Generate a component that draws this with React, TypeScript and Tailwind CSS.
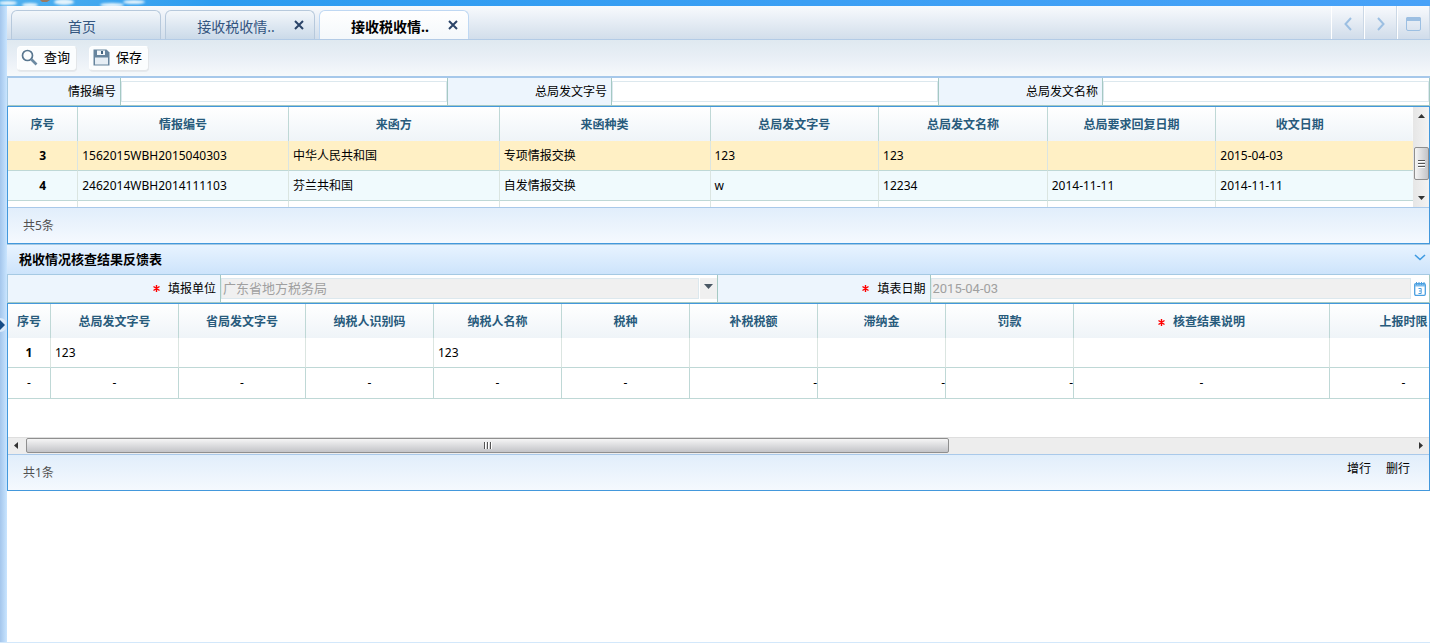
import type { ReactNode } from "react";

const tabs = [
  { id: 1, title: "首页", active: false, closable: false },
  { id: 2, title: "接收税收情..", active: false, closable: true },
  { id: 3, title: "接收税收情..", active: true, closable: true },
];

const letterColumns = [
  { title: "序号", width: "w-[5%]" },
  { title: "情报编号", width: "w-[15%]" },
  { title: "来函方", width: "w-[15%]" },
  { title: "来函种类", width: "w-[15%]" },
  { title: "总局发文字号", width: "w-[12%]" },
  { title: "总局发文名称", width: "w-[12%]" },
  { title: "总局要求回复日期", width: "w-[12%]" },
  { title: "收文日期", width: "w-[14%]" },
];

const letters = [
  { bg: "bg-[#fff0c5]", cells: ["3", "1562015WBH2015040303", "中华人民共和国", "专项情报交换", "123", "123", "", "2015-04-03"] },
  { bg: "bg-[#f0fafd]", cells: ["4", "2462014WBH2014111103", "芬兰共和国", "自发情报交换", "w", "12234", "2014-11-11", "2014-11-11"] },
  { bg: "bg-white", cells: ["", "", "", "", "", "", "", ""] },
];

const resultColumns = [
  { title: "序号", width: "w-[43px]", value: "1", total: "text-center" },
  { title: "总局发文字号", width: "w-[128px]", value: "123", total: "text-center" },
  { title: "省局发文字号", width: "w-[127px]", value: "", total: "text-center" },
  { title: "纳税人识别码", width: "w-[128px]", value: "", total: "text-center" },
  { title: "纳税人名称", width: "w-[128px]", value: "123", total: "text-center" },
  { title: "税种", width: "w-[128px]", value: "", total: "text-center" },
  { title: "补税税额", width: "w-[128px]", value: "", total: "text-right" },
  { title: "滞纳金", width: "w-[128px]", value: "", total: "text-right" },
  { title: "罚款", width: "w-[128px]", value: "", total: "text-right" },
  { title: "核查结果说明", width: "w-[256px]", value: "", total: "text-center", required: true },
  { title: "上报时限", width: "w-[148px]", value: "", total: "text-center" },
];

function Star() {
  return (
    <svg width="7" height="7" viewBox="0 0 7 7" className="inline-block shrink-0" aria-hidden="true">
      <path d="M3.5 0v7M0.5 1.5l6 4M6.5 1.5l-6 4" stroke="#f00" strokeWidth="1.4" />
    </svg>
  );
}

function CloseIcon() {
  return (
    <svg width="10" height="10" viewBox="0 0 10 10" aria-hidden="true">
      <path d="M1 1l8 8M9 1l-8 8" stroke="#2b4468" strokeWidth="2" />
    </svg>
  );
}

function NavButton({ label, children }: { label: string; children: ReactNode }) {
  return (
    <button
      type="button"
      aria-label={label}
      className="flex h-full w-[33px] items-center justify-center border-l border-l-white border-r border-r-[#cbd8e6] bg-linear-to-b from-[#f8fafd] to-[#d0dcea] pt-[2px] text-[#9cbfe2]"
    >
      {children}
    </button>
  );
}

function ToolButton({ children }: { children: ReactNode }) {
  return (
    <button
      type="button"
      className="flex h-[25px] items-center gap-[6px] rounded-sm border border-[#e3e6e9] border-t-white border-l-white bg-[#fbfdfe] pr-[6px] pb-px pl-[3px] text-[13px] shadow-2xs"
    >
      {children}
    </button>
  );
}

function Field({ id, label, width }: { id: string; label: string; width: string }) {
  return (
    <>
      <label
        htmlFor={id}
        className={`flex h-[27px] shrink-0 items-center justify-end border-r border-[#a5c9c3] bg-[#edf5fd] pr-1 ${width}`}
      >
        {label}
      </label>
      <div className="flex min-w-0 flex-1 items-center border-r border-[#a5c9c3] bg-white">
        <input id={id} type="text" className="h-[21px] w-full border border-[#dce8ee] bg-white px-1 outline-none" />
      </div>
    </>
  );
}

export default function App() {
  return (
    <div className="flex min-h-screen flex-col overflow-hidden border-b border-[#d3e8fb] bg-white font-['Noto_Sans','Noto_Sans_CJK_SC',sans-serif] text-xs text-black">
      {/* Banner edge */}
      <div className="h-[6px] overflow-hidden bg-linear-to-r from-[#4fb0ee] via-[#2c9cf0] via-15% to-[#48a2f8]">
        <svg width="180" height="6" viewBox="0 0 180 6" aria-hidden="true">
          <defs>
            <filter id="cloud">
              <feGaussianBlur stdDeviation="1.2" />
            </filter>
          </defs>
          <g fill="#e3f3fc" filter="url(#cloud)">
            <ellipse cx="8" cy="3" rx="9" ry="2" />
            <ellipse cx="30" cy="5" rx="8" ry="2" />
            <ellipse cx="64" cy="2" rx="10" ry="3" />
            <ellipse cx="112" cy="5" rx="12" ry="2" />
            <ellipse cx="134" cy="2" rx="11" ry="2" />
          </g>
          <path d="M40 0h10l-3 2h-5z" fill="#9b7b62" />
        </svg>
      </div>

      <div className="flex flex-1">
        {/* Splitter */}
        <div className="flex w-[7px] shrink-0 bg-linear-to-r from-[#a4c6ec] to-[#c9e5ff]">
          <button type="button" aria-label="展开" className="mt-[312px] h-[14px] w-[6px]">
            <svg width="6" height="14" viewBox="0 0 6 14" aria-hidden="true">
              <path d="M0 0a7 7 0 0 1 0 14z" fill="#dbeafa" />
              <path d="M0 2l5 5-5 5z" fill="#174c86" />
            </svg>
          </button>
        </div>

        <main className="min-w-0 flex-1">
          {/* Tabs */}
          <div className="flex h-[34px] items-end border-b border-[#b3cbe6] bg-linear-to-b from-[#f8fafd] to-[#d2deeb] pl-1">
            <div role="tablist" className="flex flex-1 gap-1">
              {tabs.map((tab) => (
                <div
                  key={tab.id}
                  className={`flex h-[29px] w-[150px] items-center rounded-t-md border border-b-0 pt-[3px] pl-5 ${
                    tab.active
                      ? "-mb-px border-[#bfd8f3] bg-linear-to-b from-white to-[#f4f8fb]"
                      : "border-[#b7c9dc] bg-linear-to-b from-[#f3f7fb] to-[#cbdae9]"
                  }`}
                >
                  <button
                    type="button"
                    role="tab"
                    aria-selected={tab.active}
                    className={`flex-1 text-center text-sm ${tab.active ? "font-bold text-black" : "text-[#33557f]"}`}
                  >
                    {tab.title}
                  </button>
                  <span className="flex w-7 pb-1 pl-2">
                    {tab.closable && (
                      <button type="button" aria-label="关闭">
                        <CloseIcon />
                      </button>
                    )}
                  </span>
                </div>
              ))}
            </div>
            <div className="flex h-full">
              <NavButton label="向左">
                <svg width="8" height="14" viewBox="0 0 8 14" fill="none" stroke="currentColor" strokeWidth="2">
                  <path d="M7 1L1.500 7 7 13" />
                </svg>
              </NavButton>
              <NavButton label="向右">
                <svg width="8" height="14" viewBox="0 0 8 14" fill="none" stroke="currentColor" strokeWidth="2">
                  <path d="M1 1l5.500 6L1 13" />
                </svg>
              </NavButton>
              <NavButton label="最大化">
                <svg width="15" height="14" viewBox="0 0 15 14">
                  <rect x=".5" y=".5" width="14" height="13" rx="1.500" fill="none" stroke="currentColor" />
                  <path d="M0 1.500A1.500 1.500 0 0 1 1.500 0h12A1.500 1.500 0 0 1 15 1.500V4H0z" fill="currentColor" />
                </svg>
              </NavButton>
            </div>
          </div>

          {/* Toolbar */}
          <div className="flex h-9 items-center gap-3 bg-linear-to-b from-[#dfe9f0] via-[#e9eff6] to-[#f6f9fb] pl-[10px]">
            <ToolButton>
              <svg width="17" height="17" viewBox="0 0 17 17" fill="none" aria-hidden="true">
                <circle cx="6.500" cy="6.500" r="5" stroke="#58768f" strokeWidth="1.700" />
                <path d="M10.500 10.500l5 5" stroke="#6c8aa2" strokeWidth="2.600" />
              </svg>
              查询
            </ToolButton>
            <ToolButton>
              <svg width="17" height="17" viewBox="0 0 17 17" aria-hidden="true">
                <path d="M.5 .5h13L16.500 3.500v13H.5z" fill="#67859e" />
                <path d="M4 1.500h8v4.500H4z" fill="#f4f8fb" />
                <path d="M8 2h2v3H8z" fill="#3f627f" />
                <path d="M2 8.500h13v7H2z" fill="#e6eef5" />
              </svg>
              保存
            </ToolButton>
          </div>

          {/* Query form */}
          <form className="flex border-t-2 border-b border-l border-t-[#a6c8ea] border-b-[#a5c9c3] border-l-[#a5c9e3]">
            <Field id="code" label="情报编号" width="w-[113px]" />
            <Field id="docNo" label="总局发文字号" width="w-[164px]" />
            <Field id="docName" label="总局发文名称" width="w-[164px]" />
          </form>

          {/* Letters */}
          <section className="border border-[#4398dc]">
            <div className="flex h-[100px]">
              <div className="min-w-0 flex-1 overflow-hidden">
                <table className="w-full table-fixed border-separate border-spacing-0">
                  <thead>
                    <tr className="h-[34px] bg-linear-to-b from-white to-[#eff4f8]">
                      {letterColumns.map((col) => (
                        <th
                          key={col.title}
                          className={`border-r border-[#bfd8d6] pt-[2px] font-bold text-[#285b7c] last:border-r-0 last:pr-[30px] ${col.width}`}
                        >
                          {col.title}
                        </th>
                      ))}
                    </tr>
                  </thead>
                  <tbody>
                    {letters.map((row, i) => (
                      <tr key={i} className={`h-[30px] ${row.bg}`}>
                        {row.cells.map((cell, j) => (
                          <td
                            key={j}
                            className={`border-r border-b border-r-[#dbe5e1] border-b-[#bfd8d6] last:border-r-0 ${
                              j === 0 ? "text-center font-bold" : "pl-1"
                            }`}
                          >
                            {cell}
                          </td>
                        ))}
                      </tr>
                    ))}
                  </tbody>
                </table>
              </div>
              <div className="flex w-4 flex-col items-center bg-linear-to-r from-[#e6e6e6] to-[#f3f3f3] py-[7px]">
                <svg width="7" height="4" viewBox="0 0 7 4" aria-hidden="true">
                  <path d="M0 4l3.500-4L7 4z" fill="#333" />
                </svg>
                <div className="mt-[29px] flex h-[33px] w-[15px] items-center justify-center rounded-xs border border-[#8f8f8f] bg-linear-to-r from-[#f5f5f5] to-[#c3c4c8]">
                  <svg width="7" height="8" viewBox="0 0 7 8" aria-hidden="true">
                    <path d="M0 .5h7M0 3.500h7M0 6.500h7" stroke="#555" />
                    <path d="M0 1.500h7M0 4.500h7M0 7.500h7" stroke="#fff" />
                  </svg>
                </div>
                <svg width="7" height="4" viewBox="0 0 7 4" className="mt-auto" aria-hidden="true">
                  <path d="M0 0h7L3.500 4z" fill="#333" />
                </svg>
              </div>
            </div>
            <div className="flex h-9 items-center border-t border-[#a9c9ea] bg-linear-to-b from-[#e1eefb] to-[#f5f9fe] pl-[15px] text-[#505050]">
              共5条
            </div>
          </section>

          {/* Feedback form */}
          <div className="flex h-[31px] items-center justify-between border-y border-[#a5c9e3] bg-linear-to-b from-[#e8f3ff] to-[#cde4fb] pr-1 pl-3">
            <h2 className="text-[13px] font-bold">税收情况核查结果反馈表</h2>
            <button type="button" aria-label="收起" className="pb-1">
              <svg width="12" height="7" viewBox="0 0 12 7" fill="none" aria-hidden="true">
                <path d="M1 1l5 4.500L11 1" stroke="#3f9be2" strokeWidth="1.600" />
              </svg>
            </button>
          </div>
          <form className="flex border-b border-l border-b-[#a5c9c3] border-l-[#a5c9e3]">
            <label
              htmlFor="unit"
              className="flex h-[27px] w-[213px] shrink-0 items-center justify-end gap-2 border-r border-[#a5c9c3] bg-[#edf5fd] pr-1"
            >
              <Star />
              填报单位
            </label>
            <div className="flex min-w-0 flex-1 items-center gap-px border-r border-[#a5c9c3]">
              <select
                id="unit"
                disabled
                className="h-[21px] min-w-0 flex-1 appearance-none border border-[#dce8ee] bg-[#f0f0f0] px-px font-['Roboto','Noto_Sans_CJK_SC',sans-serif] text-[13px] leading-[18px] text-[#a0a0a0] opacity-100"
              >
                <option>广东省地方税务局</option>
              </select>
              <span className="flex h-[21px] w-[17px] justify-center bg-[#f0f0f0] pt-[6px]">
                <svg width="9" height="5" viewBox="0 0 9 5" aria-hidden="true">
                  <path d="M0 0h9L4.500 5z" fill="#4a5763" />
                </svg>
              </span>
            </div>
            <label
              htmlFor="date"
              className="flex h-[27px] w-[213px] shrink-0 items-center justify-end gap-2 border-r border-[#a5c9c3] bg-[#edf5fd] pr-1"
            >
              <Star />
              填表日期
            </label>
            <div className="flex min-w-0 flex-1 items-center gap-[3px] border-r border-[#a5c9c3] pr-[3px]">
              <input
                id="date"
                type="text"
                disabled
                defaultValue="2015-04-03"
                className="h-[21px] min-w-0 flex-1 border border-[#dce8ee] bg-[#f0f0f0] px-px font-['Roboto','Noto_Sans_CJK_SC',sans-serif] text-[13px] text-[#a0a0a0]"
              />
              <button type="button" aria-label="选择日期">
                <svg width="12" height="14" viewBox="0 0 12 14" aria-hidden="true">
                  <rect x=".7" y="1.700" width="10.600" height="11.600" rx="1.200" fill="#fff" stroke="#4a9fe0" strokeWidth="1.300" />
                  <path d="M1 2h10v2.500H1z" fill="#7cbcec" />
                  <path d="M2.500 0v3M5 0v3M7.500 0v3M10 0v3" stroke="#4a9fe0" />
                  <path d="M4.500 6.500h2.700v5H4.500M5 9h2" fill="none" stroke="#4a9fe0" />
                </svg>
              </button>
            </div>
          </form>

          {/* Results */}
          <section className="border border-[#4398dc]">
            <div className="h-[133px] overflow-hidden">
              <table className="w-[1470px] table-fixed border-separate border-spacing-0">
                <thead>
                  <tr className="h-[34px] bg-linear-to-b from-white to-[#eff4f8]">
                    {resultColumns.map((col) => (
                      <th key={col.title} className={`border-r border-[#bfd8d6] pt-[2px] font-bold text-[#285b7c] ${col.width}`}>
                        {col.required ? (
                          <span className="inline-flex items-center gap-2">
                            <Star />
                            {col.title}
                          </span>
                        ) : (
                          col.title
                        )}
                      </th>
                    ))}
                  </tr>
                </thead>
                <tbody>
                  <tr className="h-[30px]">
                    {resultColumns.map((col, i) => (
                      <td
                        key={col.title}
                        className={`border-r border-b border-r-[#dbe5e1] border-b-[#bfd8d6] ${
                          i === 0 ? "text-center font-bold" : "pl-1"
                        }`}
                      >
                        {col.value}
                      </td>
                    ))}
                  </tr>
                  <tr className="h-[31px]">
                    {resultColumns.map((col) => (
                      <td key={col.title} className={`border-r border-b border-[#bfd8d6] ${col.total}`}>
                        -
                      </td>
                    ))}
                  </tr>
                </tbody>
              </table>
            </div>
            <div className="flex h-[17px] items-center border-t border-[#dedede] bg-[#ededed] px-[6px] pb-px">
              <svg width="4" height="7" viewBox="0 0 4 7" aria-hidden="true">
                <path d="M4 0v7L0 3.500z" fill="#333" />
              </svg>
              <div className="flex flex-1 px-2">
                <div className="flex h-[15px] w-2/3 items-center justify-center rounded-xs border border-[#8f8f8f] bg-linear-to-b from-[#f5f5f5] to-[#c3c4c8]">
                  <svg width="8" height="7" viewBox="0 0 8 7" aria-hidden="true">
                    <path d="M.5 0v7M3.500 0v7M6.500 0v7" stroke="#555" />
                    <path d="M1.500 0v7M4.500 0v7M7.500 0v7" stroke="#fff" />
                  </svg>
                </div>
              </div>
              <svg width="4" height="7" viewBox="0 0 4 7" aria-hidden="true">
                <path d="M0 0v7l4-3.500z" fill="#333" />
              </svg>
            </div>
            <div className="flex h-9 items-center justify-between border-t border-[#a9c9ea] bg-linear-to-b from-[#e1eefb] to-[#f5f9fe] pr-[19px] pl-[15px]">
              <span className="text-[#505050]">共1条</span>
              <div className="flex gap-[15px] pb-2">
                <button type="button">增行</button>
                <button type="button">删行</button>
              </div>
            </div>
          </section>
        </main>
      </div>
    </div>
  );
}
